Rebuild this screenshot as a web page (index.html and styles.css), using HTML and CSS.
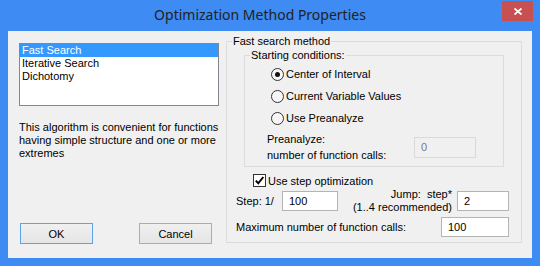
FILE: index.html
```html
<!DOCTYPE html>
<html lang="en">
<head>
    <meta charset="UTF-8">
    <title>Optimization Method Properties</title>
    <link rel="stylesheet" href="styles.css">
</head>
<body>

    <div class="window">
        <div class="titlebar">
            <span class="title">Optimization Method Properties</span>
            <button class="close-btn">
                <svg width="8" height="7" viewBox="0 0 8 7"><path d="M0.5 0.5 L7.5 6.5 M7.5 0.5 L0.5 6.5" stroke="#fff" stroke-width="1.8" fill="none"/></svg>
            </button>
        </div>

        <div class="client">
            <div class="left-col">
                <ul class="method-list">
                    <li class="selected">Fast Search</li>
                    <li>Iterative Search</li>
                    <li>Dichotomy</li>
                </ul>
                <p class="description">This algorithm is convenient for functions<br>having simple structure and one or more<br>extremes</p>
                <div class="buttons">
                    <button class="btn default">OK</button>
                    <button class="btn">Cancel</button>
                </div>
            </div>

            <fieldset class="group method-group">
                <legend>Fast search method</legend>

                <fieldset class="group start-group">
                    <legend>Starting conditions:</legend>
                    <div class="radio-row first"><span class="radio checked"></span>Center of Interval</div>
                    <div class="radio-row"><span class="radio"></span>Current Variable Values</div>
                    <div class="radio-row"><span class="radio"></span>Use Preanalyze</div>
                    <div class="preanalyze-row">
                        <span class="preanalyze-label">Preanalyze:<br>number of function calls:</span>
                        <span class="edit disabled pre-edit">0</span>
                    </div>
                </fieldset>

                <div class="check-row">
                    <span class="checkbox">
                        <svg width="11" height="11" viewBox="0 0 11 11"><path d="M1.8 5.6 L4.3 8.3 L9.3 2" stroke="#000" stroke-width="2" fill="none"/></svg>
                    </span>Use step optimization
                </div>

                <div class="step-row">
                    <span class="step-label">Step: 1/</span>
                    <span class="edit step-edit">100</span>
                    <span class="jump-label">Jump:&nbsp; step*<br>(1..4 recommended)</span>
                    <span class="edit jump-edit">2</span>
                </div>

                <div class="max-row">
                    <span>Maximum number of function calls:</span>
                    <span class="edit max-edit">100</span>
                </div>
            </fieldset>
        </div>
    </div>

</body>
</html>
```

FILE: styles.css
```css
* {
    box-sizing: border-box;
}
body {
    margin: 0;
    font-family: "Liberation Sans", Arial, sans-serif;
    font-size: 11px;
    color: #000;
}
.window {
    width: 540px;
    height: 266px;
    background-color: #3d8bf3;
    padding: 0 8px 8px;
    display: flex;
    flex-direction: column;
}
.titlebar {
    height: 31px;
    display: flex;
    align-items: flex-start;
}
.title {
    flex: 1;
    text-align: center;
    padding-left: 10px;
    line-height: 30px;
    font-family: "Noto Sans", sans-serif;
    font-size: 14px;
    color: #222;
}
.close-btn {
    width: 31px;
    height: 20px;
    margin: 1px -1px 0 0;
    padding: 0;
    border: none;
    background-color: #c75050;
    display: flex;
    align-items: center;
    justify-content: center;
}
.client {
    flex: 1;
    background-color: #f0f0f0;
    display: flex;
}
/* left side: list, hint, buttons */
.left-col {
    width: 211px;
    padding-left: 11px;
    display: flex;
    flex-direction: column;
}
.method-list {
    margin: 12px 0 0;
    padding: 0;
    list-style: none;
    height: 63px;
    background-color: white;
    border: 1px solid #828790;
}
.method-list li {
    line-height: 13px;
    padding-left: 2px;
}
.method-list li.selected {
    background-color: #3399ff;
    color: white;
}
.description {
    margin: 15px 0 0;
    line-height: 13px;
}
.buttons {
    margin-top: auto;
    margin-bottom: 14px;
    display: flex;
    justify-content: space-between;
    padding: 0 7px 0 1px;
}
.btn {
    width: 73px;
    height: 21px;
    padding: 0;
    font-family: inherit;
    font-size: 11px;
    color: #000;
    background: linear-gradient(#f0f0f0, #e5e5e5);
    border: 1px solid #acacac;
}
.btn.default {
    border-color: #5fa2e8;
}
/* group boxes */
fieldset.group {
    border: 1px solid #dcdcdc;
    margin: 0;
    padding: 0;
    min-width: 0;
}
fieldset.group legend {
    padding: 0 1px;
    margin-left: 5px;
    line-height: 13px;
}
.method-group {
    width: 296px;
    margin: 4px 10px 15px 7px !important;
}
.start-group {
    margin: 1px 17px 0 !important;
    padding-bottom: 3px !important;
}
.radio-row {
    display: flex;
    align-items: center;
    height: 22px;
    padding-left: 26px;
}
.radio-row.first {
    margin-top: 1px;
}
.radio {
    width: 13px;
    height: 13px;
    margin-right: 2px;
    border: 1px solid #333;
    border-radius: 50%;
    background-color: #f6f6f6;
    display: flex;
    align-items: center;
    justify-content: center;
}
.radio.checked::after {
    content: "";
    width: 5px;
    height: 5px;
    border-radius: 50%;
    background-color: #111;
}
.preanalyze-row {
    display: flex;
    align-items: center;
    margin-top: 2px;
    padding-left: 22px;
}
.preanalyze-label {
    line-height: 16px;
}
.edit {
    display: block;
    height: 20px;
    line-height: 18px;
    padding-left: 6px;
    background-color: white;
    border: 1px solid #b4b4b4;
}
.edit.disabled {
    background-color: #f0f0f0;
    border-color: #d9d9d9;
    color: #7a7a7a;
}
.pre-edit {
    width: 62px;
    height: 21px;
    line-height: 19px;
    margin: 0 27px 0 auto;
}
.check-row {
    display: flex;
    align-items: center;
    height: 13px;
    margin-top: 7px;
    padding-left: 26px;
}
.checkbox {
    width: 13px;
    height: 13px;
    margin-right: 2px;
    border: 1px solid #333;
    background-color: white;
    display: flex;
}
.step-row {
    display: flex;
    align-items: center;
    height: 26px;
    margin-top: 1px;
    padding-left: 9px;
}
.step-label {
    width: 46px;
}
.step-edit {
    width: 56px;
}
.jump-label {
    flex: 1;
    text-align: right;
    line-height: 13px;
    padding-right: 5px;
}
.jump-edit {
    width: 52px;
    margin-right: 12px;
}
.max-row {
    display: flex;
    align-items: center;
    margin-top: 3px;
    padding-left: 9px;
}
.max-edit {
    width: 68px;
    margin: 0 12px 0 auto;
}
```
